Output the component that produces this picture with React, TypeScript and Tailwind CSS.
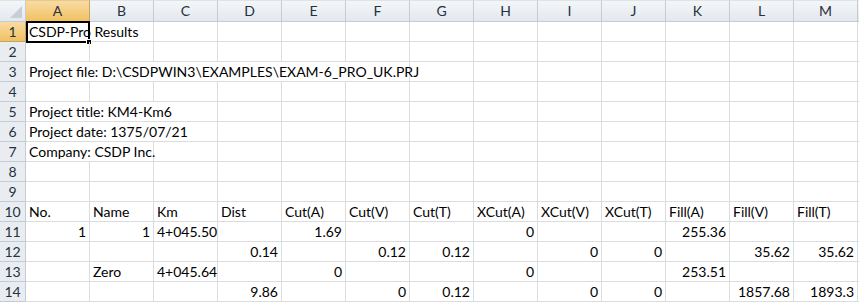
const COLS = ['A', 'B', 'C', 'D', 'E', 'F', 'G', 'H', 'I', 'J', 'K', 'L', 'M'];
const ROW_COUNT = 14;

type Cell = { col: number; text: string; right?: boolean; span?: number };

const SPAN: Record<number, string> = {
  1: '',
  2: 'col-span-2',
  3: 'col-span-3',
  6: 'col-span-6',
};

const num = (col: number, text: string): Cell => ({ col, text, right: true });
const txt = (col: number, text: string, span = 1): Cell => ({ col, text, span });

const sheet: Record<number, Cell[]> = {
  1: [txt(0, 'CSDP-Pro Results', 2)],
  3: [txt(0, 'Project file: D:\\CSDPWIN3\\EXAMPLES\\EXAM-6_PRO_UK.PRJ', 6)],
  5: [txt(0, 'Project title: KM4-Km6', 3)],
  6: [txt(0, 'Project date: 1375/07/21', 3)],
  7: [txt(0, 'Company: CSDP Inc.', 2)],
  10: [
    'No.',
    'Name',
    'Km',
    'Dist',
    'Cut(A)',
    'Cut(V)',
    'Cut(T)',
    'XCut(A)',
    'XCut(V)',
    'XCut(T)',
    'Fill(A)',
    'Fill(V)',
    'Fill(T)',
  ].map((t, i) => txt(i, t)),
  11: [num(0, '1'), num(1, '1'), txt(2, '4+045.50'), num(4, '1.69'), num(7, '0'), num(10, '255.36')],
  12: [num(3, '0.14'), num(5, '0.12'), num(6, '0.12'), num(8, '0'), num(9, '0'), num(11, '35.62'), num(12, '35.62')],
  13: [txt(1, 'Zero'), txt(2, '4+045.64'), num(4, '0'), num(7, '0'), num(10, '253.51')],
  14: [num(3, '9.86'), num(5, '0'), num(6, '0.12'), num(8, '0'), num(9, '0'), num(11, '1857.68'), num(12, '1893.3')],
};

const gridCols = 'grid grid-cols-[26px_repeat(13,64px)_1fr]';

function SheetRow({ row }: { row: number }) {
  const cells = sheet[row] ?? [];
  const out = [];
  let c = 0;
  while (c < COLS.length) {
    const cell = cells.find((x) => x.col === c);
    const span = cell?.span ?? 1;
    const isActive = row === 1 && c === 0;
    out.push(
      <div
        key={c}
        className={`relative h-5 whitespace-nowrap border-b border-r border-[#dadcdd] px-[3px] leading-[19px] text-black ${SPAN[span]} ${
          cell?.right ? 'text-right' : 'text-left'
        }`}
      >
        {cell?.text}
        {isActive && (
          <div className="pointer-events-none absolute -top-px left-0 h-[22px] w-16 border-2 border-black">
            <div className="absolute -bottom-[4px] -right-[4px] h-[6px] w-[6px] border border-white bg-black" />
          </div>
        )}
      </div>
    );
    c += span;
  }

  return (
    <div className={gridCols}>
      <div
        className={`h-5 border-b border-r text-center leading-[19px] text-[#27313c] ${
          row === 1
            ? 'border-[#c2a36a] bg-gradient-to-b from-[#f9dba3] to-[#f1c15f]'
            : 'border-[#c5cbd3] bg-[#e9edf2]'
        }`}
      >
        {row}
      </div>
      {out}
      <div className="h-5 border-b border-[#dadcdd]" />
    </div>
  );
}

function ColumnHeader() {
  return (
    <div className={gridCols}>
      <div className="relative h-[22px] border-b border-r border-t border-[#c5cbd3] border-t-[#dfe3e8] bg-gradient-to-b from-[#f4f6f8] to-[#e3e8ee]">
        <svg className="absolute bottom-[3px] right-[3px]" width="12" height="12" viewBox="0 0 12 12">
          <path d="M12 0 L12 12 L0 12 Z" fill="#c8ced6" />
        </svg>
      </div>
      {COLS.map((col, i) => (
        <div
          key={col}
          className={`h-[22px] border-b border-r border-t text-center leading-5 text-[#27313c] ${
            i === 0
              ? 'border-[#c2a36a] border-t-[#e8c98c] bg-gradient-to-b from-[#f9dba3] to-[#f1c15f]'
              : 'border-[#c5cbd3] border-t-[#dfe3e8] bg-gradient-to-b from-[#f4f6f8] to-[#e3e8ee]'
          }`}
        >
          {col}
        </div>
      ))}
      <div className="h-[22px] border-b border-t border-[#c5cbd3] border-t-[#dfe3e8] bg-gradient-to-b from-[#f4f6f8] to-[#e3e8ee]" />
    </div>
  );
}

export default function App() {
  return (
    <div className="h-[303px] w-[859px] overflow-hidden bg-white font-['Lato',sans-serif] text-[14px]">
      <ColumnHeader />
      {Array.from({ length: ROW_COUNT }, (_, i) => (
        <SheetRow key={i + 1} row={i + 1} />
      ))}
    </div>
  );
}
